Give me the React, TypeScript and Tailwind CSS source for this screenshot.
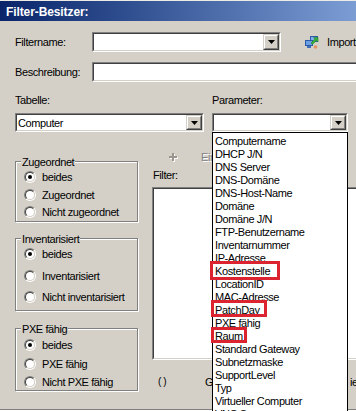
import React from "react";

type Kids = { className?: string; children?: React.ReactNode };

function Sunken({ className, children }: Kids) {
    return (
        <div className={`shrink-0 border border-t-[#808080] border-l-[#808080] border-b-white border-r-white ${className ?? ""}`}>
            <div className="h-full w-full border border-t-[#404040] border-l-[#404040] border-b-[#d4d0c8] border-r-[#d4d0c8] bg-white flex items-center">
                {children}
            </div>
        </div>
    );
}

function DropButton() {
    return (
        <div className="w-[16px] h-full shrink-0 border border-t-[#d4d0c8] border-l-[#d4d0c8] border-b-[#404040] border-r-[#404040] bg-[#d4d0c8]">
            <div className="h-full w-full border border-t-white border-l-white border-b-[#808080] border-r-[#808080] flex items-center justify-center">
                <svg width="7" height="4" viewBox="0 0 7 4">
                    <path d="M0 0h7L3.5 4z" fill="#000" />
                </svg>
            </div>
        </div>
    );
}

function Combo({ className, value }: { className?: string; value?: string }) {
    return (
        <Sunken className={className}>
            <span className="flex-1 pl-[1px] whitespace-nowrap">{value}</span>
            <DropButton />
        </Sunken>
    );
}

function Radio({ label, checked }: { label: string; checked?: boolean }) {
    return (
        <div className="flex items-center h-[14px]">
            <span className="relative w-[12px] h-[12px] shrink-0 rounded-full border border-t-[#808080] border-l-[#808080] border-b-white border-r-white">
                <span className="absolute inset-0 rounded-full bg-white border border-t-[#404040] border-l-[#404040] border-b-[#d4d0c8] border-r-[#d4d0c8] flex items-center justify-center">
                    {checked && <span className="w-[4px] h-[4px] rounded-full bg-black" />}
                </span>
            </span>
            <span className="ml-[6px] whitespace-nowrap">{label}</span>
        </div>
    );
}

function Group({ title, className, children }: Kids & { title: string }) {
    return (
        <div className={`relative border border-[#808080] shadow-[inset_1px_1px_0_#fff,1px_1px_0_#fff] pl-[8px] flex flex-col ${className ?? ""}`}>
            <span className="absolute left-[5px] -top-[7px] h-[14px] leading-[14px] px-[1px] bg-[#d4d0c8] whitespace-nowrap">{title}</span>
            {children}
        </div>
    );
}

function ImportIcon() {
    return (
        <svg width="15" height="15" viewBox="0 0 15 15">
            <rect x="6.5" y="1.5" width="7" height="5" fill="#7fb0ea" stroke="#2d5aa8" />
            <rect x="1.5" y="5.5" width="7" height="5" fill="#6b9fe4" stroke="#2d5aa8" />
            <rect x="3" y="11" width="4" height="2" fill="#3f6fb8" />
            <path d="M7 8l4-4-1.5-1.5H14V7l-1.5-1.5-4 4z" fill="#35b03a" stroke="#1f7a22" strokeWidth="0.5" />
            <circle cx="11.5" cy="12" r="1.8" fill="#e39262" />
        </svg>
    );
}

function PlusIcon() {
    return (
        <svg width="9" height="9" viewBox="0 0 9 9">
            <path d="M4 1h2v3h3v2H6v3H4V6H1V4h3z" fill="#fff" />
            <path d="M3 0h2v3h3v2H5v3H3V5H0V3h3z" fill="#9a968e" />
        </svg>
    );
}

const parameters = [
    "Computername",
    "DHCP J/N",
    "DNS Server",
    "DNS-Domäne",
    "DNS-Host-Name",
    "Domäne",
    "Domäne J/N",
    "FTP-Benutzername",
    "Inventarnummer",
    "IP-Adresse",
    "Kostenstelle",
    "LocationID",
    "MAC-Adresse",
    "PatchDay",
    "PXE fähig",
    "Raum",
    "Standard Gateway",
    "Subnetzmaske",
    "SupportLevel",
    "Typ",
    "Virtueller Computer",
    "VNC Server",
];

// red markers drawn over some of the list items
const marked: Record<string, string> = {
    Kostenstelle: "-left-[3px] -top-[4px] w-[70px] h-[19px]",
    PatchDay: "-left-[2px] -top-[4px] w-[56px] h-[17px]",
    Raum: "-left-[2px] -top-[3px] w-[36px] h-[16px]",
};

export default function App() {
    return (
        <div className="relative w-[356px] h-[411px] overflow-hidden bg-[#d4d0c8] text-black text-[11px] leading-[14px] tracking-[-0.4px] font-['Liberation_Sans',Arial,sans-serif] flex flex-col">
            {/* Title */}
            <div className="h-[1px] shrink-0 bg-[#ecebe6]" />
            <div className="h-[20px] shrink-0 bg-linear-to-r from-[#0a246a] to-[#7c9dd4] flex items-center pl-[6px] pt-[1px]">
                <span className="text-white font-bold text-[12px] tracking-[-0.1px]">Filter-Besitzer:</span>
            </div>

            {/* Filtername */}
            <div className="mt-[11px] h-[20px] shrink-0 flex items-center">
                <span className="w-[92px] shrink-0 pl-[15px]">Filtername:</span>
                <Combo className="w-[189px] h-full" />
                <span className="ml-[23px] shrink-0"><ImportIcon /></span>
                <span className="ml-[8px] whitespace-nowrap">Import</span>
            </div>

            {/* Beschreibung */}
            <div className="mt-[10px] h-[20px] shrink-0 flex items-center">
                <span className="w-[92px] shrink-0 pl-[15px]">Beschreibung:</span>
                <Sunken className="w-[280px] h-full" />
            </div>

            {/* Tabelle / Parameter */}
            <div className="mt-[11px] h-[14px] shrink-0 flex">
                <span className="w-[212px] shrink-0 pl-[15px]">Tabelle:</span>
                <span>Parameter:</span>
            </div>
            <div className="mt-[6px] h-[19px] shrink-0 flex">
                <Combo className="ml-[15px] w-[189px] h-full" value="Computer" />
                <Combo className="ml-[8px] w-[136px] h-full" />
            </div>

            {/* Body */}
            <div className="h-[277px] shrink-0 flex">
                <div className="ml-[15px] w-[123px] shrink-0 flex flex-col">
                    <Group title="Zugeordnet" className="mt-[29px] pt-[8px] pb-[2px] gap-[3.5px]">
                        <Radio label="beides" checked />
                        <Radio label="Zugeordnet" />
                        <Radio label="Nicht zugeordnet" />
                    </Group>
                    <Group title="Inventarisiert" className="mt-[16px] pt-[8px] pb-[6px] gap-[7.5px]">
                        <Radio label="beides" checked />
                        <Radio label="Inventarisiert" />
                        <Radio label="Nicht inventarisiert" />
                    </Group>
                    <Group title="PXE fähig" className="mt-[17px] pt-[9px] pb-[1px] gap-[4.5px]">
                        <Radio label="beides" checked />
                        <Radio label="PXE fähig" />
                        <Radio label="Nicht PXE fähig" />
                    </Group>
                </div>

                <div className="ml-[14px] w-[220px] shrink-0 flex flex-col">
                    <div className="mt-[17px] h-[16px] flex items-center">
                        <span className="ml-[17px]"><PlusIcon /></span>
                        <span className="ml-[23px] text-[#808080] [text-shadow:1px_1px_0_#fff] whitespace-nowrap">Einfügen</span>
                    </div>
                    <div className="mt-[3px] h-[14px] pl-[1px]">Filter:</div>
                    <Sunken className="mt-[5px] h-[173px] w-full" />
                    <div className="mt-[15px] h-[14px] flex items-center">
                        <span className="ml-[6px] w-[47px] shrink-0 tracking-[2px] text-[10px]">()</span>
                        <span className="w-[145px] shrink-0">G</span>
                        <span>ie</span>
                    </div>
                </div>
            </div>
            <div className="h-[1px] shrink-0 bg-[#808080]" />
            <div className="h-[1px] shrink-0 bg-white" />

            {/* Open parameter list */}
            <div className="absolute left-[212px] top-[132px] w-[136px] h-[290px] bg-white border border-black pt-[2px]">
                {parameters.map((p) => (
                    <div key={p} className="relative h-[13px] leading-[13px] pl-[2px] whitespace-nowrap">
                        {p}
                        {marked[p] && <span className={`absolute border-[3px] border-[#dc2430] ${marked[p]}`} />}
                    </div>
                ))}
            </div>
        </div>
    );
}
